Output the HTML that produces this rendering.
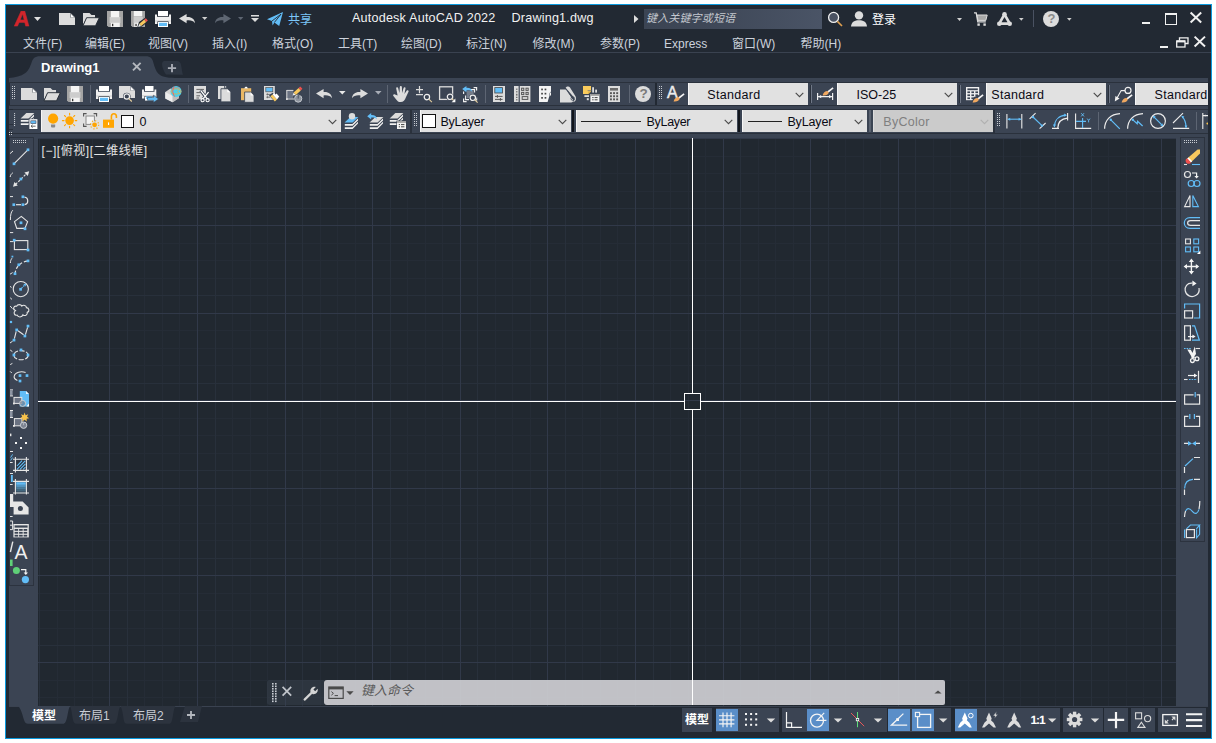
<!DOCTYPE html>
<html lang="zh-CN"><head><meta charset="utf-8"><title>Autodesk AutoCAD 2022 - Drawing1.dwg</title>
<style>
html,body{margin:0;padding:0;background:#fff;}
body{width:1216px;height:743px;position:relative;overflow:hidden;font-family:"Liberation Sans","Noto Sans CJK SC",sans-serif;}
.t{position:absolute;white-space:nowrap;}
svg{overflow:visible}
</style></head><body>
<div style="position:absolute;left:5px;top:4px;width:1205px;height:733px;border:1px solid #0a9ade;background:#222933"></div>
<div style="position:absolute;left:644px;top:9px;width:178px;height:20px;background:linear-gradient(90deg,#3b4453 0%,#3f4858 40%,#4a5466 100%)"></div>
<div class="t" style="left:646px;top:10.2px;font-size:11px;line-height:16px;color:#c4c8cf;font-style:italic;letter-spacing:0.15px">键入关键字或短语</div>
<div class="t" style="left:352px;top:10px;font-size:12.6px;line-height:16px;color:#f2f2f2;letter-spacing:0.2px">Autodesk AutoCAD 2022</div>
<div class="t" style="left:511.5px;top:10px;font-size:12.6px;line-height:16px;color:#f2f2f2;letter-spacing:0.2px">Drawing1.dwg</div>
<div class="t" style="left:288px;top:12px;font-size:12px;line-height:16px;color:#7cc6f8;">共享</div>
<div class="t" style="left:872px;top:11.5px;font-size:12px;line-height:16px;color:#ffffff;">登录</div>
<div class="t" style="left:23px;top:35.6px;font-size:12px;line-height:16px;color:#ccd2dc;">文件(F)</div>
<div class="t" style="left:85px;top:35.6px;font-size:12px;line-height:16px;color:#ccd2dc;">编辑(E)</div>
<div class="t" style="left:148px;top:35.6px;font-size:12px;line-height:16px;color:#ccd2dc;">视图(V)</div>
<div class="t" style="left:212px;top:35.6px;font-size:12px;line-height:16px;color:#ccd2dc;">插入(I)</div>
<div class="t" style="left:272px;top:35.6px;font-size:12px;line-height:16px;color:#ccd2dc;">格式(O)</div>
<div class="t" style="left:338px;top:35.6px;font-size:12px;line-height:16px;color:#ccd2dc;">工具(T)</div>
<div class="t" style="left:401px;top:35.6px;font-size:12px;line-height:16px;color:#ccd2dc;">绘图(D)</div>
<div class="t" style="left:466px;top:35.6px;font-size:12px;line-height:16px;color:#ccd2dc;">标注(N)</div>
<div class="t" style="left:532.5px;top:35.6px;font-size:12px;line-height:16px;color:#ccd2dc;">修改(M)</div>
<div class="t" style="left:600px;top:35.6px;font-size:12px;line-height:16px;color:#ccd2dc;">参数(P)</div>
<div class="t" style="left:664px;top:35.6px;font-size:12px;line-height:16px;color:#ccd2dc;">Express</div>
<div class="t" style="left:732px;top:35.6px;font-size:12px;line-height:16px;color:#ccd2dc;">窗口(W)</div>
<div class="t" style="left:800.5px;top:35.6px;font-size:12px;line-height:16px;color:#ccd2dc;">帮助(H)</div>
<div style="position:absolute;left:6px;top:52px;width:1205px;height:1px;background:#3a4250;"></div>
<div style="position:absolute;left:9px;top:78px;width:1199px;height:4px;background:#3b4453;"></div>
<div style="position:absolute;left:9px;top:82px;width:1199px;height:1px;background:#2a313c;"></div>
<svg style="position:absolute;left:9px;top:56px;" width="180" height="23" viewBox="0 0 180 23"><path d="M0,22 C6,21.5 12,20.2 16,17.2 C20,14.4 21.2,10 22.6,6.4 C24,2.4 25.6,0.3 31,0.3 L136.5,0.3 C142,0.3 143.4,3 144.3,6.4 C145.5,11 147,15 149.2,17.5 C152,20.5 157,21.8 166,22 Z" fill="#3b4453"/><path d="M157,18.6 C154,14 151,6 155,5 L168,5 C171.5,5 172,8 172.6,12 C173,15 173.4,17 174,18.8 Z" fill="#2e3642"/></svg>
<div class="t" style="left:41px;top:59.5px;font-size:13px;line-height:16px;color:#ffffff;font-weight:bold">Drawing1</div>
<div style="position:absolute;left:10px;top:83px;width:644.5px;height:22px;background:#3b4453;"></div>
<div style="position:absolute;left:656.5px;top:83px;width:551.5px;height:22px;background:#3b4453;"></div>
<div style="position:absolute;left:9px;top:105px;width:1199px;height:1px;background:#2a313c;"></div>
<div style="position:absolute;left:9px;top:106px;width:1199px;height:3px;background:#3b4453;"></div>
<div style="position:absolute;left:12.5px;top:109px;width:1195.5px;height:1px;background:#2a313c;"></div>
<div style="position:absolute;left:9px;top:110px;width:1199px;height:23px;background:#3b4453;"></div>
<div style="position:absolute;left:12.5px;top:133px;width:1195.5px;height:1px;background:#2a313c;"></div>
<div style="position:absolute;left:9px;top:134px;width:1199px;height:4px;background:#3b4453;"></div>
<div style="position:absolute;left:688px;top:83px;width:120px;height:22px;background:#e1e1e1;"></div>
<div style="position:absolute;left:688px;top:83px;width:1px;height:22px;background:#f6f6f6;"></div>
<div class="t" style="left:707.3px;top:86.9px;font-size:12.5px;line-height:16px;color:#0a0a14;letter-spacing:0.3px">Standard</div>
<svg style="position:absolute;left:795.4px;top:91.5px;" width="9" height="6" viewBox="0 0 9 6"><path d="M0.7,0.8 L4.5,4.6 L8.3,0.8" fill="none" stroke="#4a4a4a" stroke-width="1.1"/></svg>
<div style="position:absolute;left:837px;top:83px;width:120px;height:22px;background:#e1e1e1;"></div>
<div style="position:absolute;left:837px;top:83px;width:1px;height:22px;background:#f6f6f6;"></div>
<div class="t" style="left:856.5px;top:86.9px;font-size:12.5px;line-height:16px;color:#0a0a14;letter-spacing:0px">ISO-25</div>
<svg style="position:absolute;left:944.4px;top:91.5px;" width="9" height="6" viewBox="0 0 9 6"><path d="M0.7,0.8 L4.5,4.6 L8.3,0.8" fill="none" stroke="#4a4a4a" stroke-width="1.1"/></svg>
<div style="position:absolute;left:986px;top:83px;width:120px;height:22px;background:#e1e1e1;"></div>
<div style="position:absolute;left:986px;top:83px;width:1px;height:22px;background:#f6f6f6;"></div>
<div class="t" style="left:991.3px;top:86.9px;font-size:12.5px;line-height:16px;color:#0a0a14;letter-spacing:0.28px">Standard</div>
<svg style="position:absolute;left:1093.4px;top:91.5px;" width="9" height="6" viewBox="0 0 9 6"><path d="M0.7,0.8 L4.5,4.6 L8.3,0.8" fill="none" stroke="#4a4a4a" stroke-width="1.1"/></svg>
<div style="position:absolute;left:1135px;top:83px;width:73px;height:22px;background:#e1e1e1;"></div>
<div style="position:absolute;left:1135px;top:83px;width:1px;height:22px;background:#f6f6f6;"></div>
<div class="t" style="left:1154.6px;top:86.9px;font-size:12.5px;line-height:16px;color:#0a0a14;letter-spacing:0.28px">Standard</div>
<div style="position:absolute;left:41px;top:110px;width:300px;height:22px;background:#e1e1e1;"></div>
<div style="position:absolute;left:41px;top:110px;width:1px;height:22px;background:#f6f6f6;"></div>
<div class="t" style="left:139.5px;top:113.9px;font-size:12.5px;line-height:16px;color:#0a0a14;letter-spacing:0px">0</div>
<svg style="position:absolute;left:328.4px;top:118.5px;" width="9" height="6" viewBox="0 0 9 6"><path d="M0.7,0.8 L4.5,4.6 L8.3,0.8" fill="none" stroke="#4a4a4a" stroke-width="1.1"/></svg>
<div style="position:absolute;left:420px;top:110px;width:150.5px;height:22px;background:#e1e1e1;"></div>
<div style="position:absolute;left:420px;top:110px;width:1px;height:22px;background:#f6f6f6;"></div>
<div class="t" style="left:440.5px;top:113.9px;font-size:12.5px;line-height:16px;color:#0a0a14;letter-spacing:-0.28px">ByLayer</div>
<svg style="position:absolute;left:557.9px;top:118.5px;" width="9" height="6" viewBox="0 0 9 6"><path d="M0.7,0.8 L4.5,4.6 L8.3,0.8" fill="none" stroke="#4a4a4a" stroke-width="1.1"/></svg>
<div style="position:absolute;left:576px;top:110px;width:160.5px;height:22px;background:#e1e1e1;"></div>
<div style="position:absolute;left:576px;top:110px;width:1px;height:22px;background:#f6f6f6;"></div>
<div class="t" style="left:646.6px;top:113.9px;font-size:12.5px;line-height:16px;color:#0a0a14;letter-spacing:-0.33px">ByLayer</div>
<svg style="position:absolute;left:723.9px;top:118.5px;" width="9" height="6" viewBox="0 0 9 6"><path d="M0.7,0.8 L4.5,4.6 L8.3,0.8" fill="none" stroke="#4a4a4a" stroke-width="1.1"/></svg>
<div style="position:absolute;left:742px;top:110px;width:125px;height:22px;background:#e1e1e1;"></div>
<div style="position:absolute;left:742px;top:110px;width:1px;height:22px;background:#f6f6f6;"></div>
<div class="t" style="left:787.4px;top:113.9px;font-size:12.5px;line-height:16px;color:#0a0a14;letter-spacing:-0.15px">ByLayer</div>
<svg style="position:absolute;left:854.4px;top:118.5px;" width="9" height="6" viewBox="0 0 9 6"><path d="M0.7,0.8 L4.5,4.6 L8.3,0.8" fill="none" stroke="#4a4a4a" stroke-width="1.1"/></svg>
<div style="position:absolute;left:873px;top:110px;width:119.5px;height:22px;background:#cbcbcb;"></div>
<div style="position:absolute;left:873px;top:110px;width:1px;height:22px;background:#dcdcdc;"></div>
<div class="t" style="left:883.3px;top:113.9px;font-size:12.5px;line-height:16px;color:#7f7f7f;letter-spacing:0.28px">ByColor</div>
<svg style="position:absolute;left:979.9px;top:118.5px;" width="9" height="6" viewBox="0 0 9 6"><path d="M0.7,0.8 L4.5,4.6 L8.3,0.8" fill="none" stroke="#b0b0b0" stroke-width="1.1"/></svg>
<div style="position:absolute;left:572px;top:110px;width:2px;height:22px;background:#11151b;"></div>
<div style="position:absolute;left:738px;top:110px;width:2px;height:22px;background:#11151b;"></div>
<div style="position:absolute;left:869px;top:110px;width:2px;height:22px;background:#5a6270;"></div>
<div style="position:absolute;left:581px;top:121px;width:60px;height:1px;background:#222;"></div>
<div style="position:absolute;left:747.5px;top:121px;width:34.5px;height:1px;background:#222;"></div>
<div style="position:absolute;left:121px;top:115px;width:11px;height:11px;background:#fff;border:1px solid #111"></div>
<div style="position:absolute;left:422px;top:114px;width:12px;height:12px;background:#fff;border:1px solid #111"></div>
<div style="position:absolute;left:9px;top:138px;width:29px;height:568px;background:#3b4453;"></div>
<div style="position:absolute;left:1176px;top:138px;width:32px;height:568px;background:#3b4453;"></div>
<div style="position:absolute;left:9px;top:137px;width:25px;height:449px;background:#3b4453;border:1px solid #2c333f;box-sizing:border-box"></div>
<div style="position:absolute;left:1180px;top:137px;width:25px;height:405px;background:#3b4453;border:1px solid #2c333f;box-sizing:border-box"></div>
<svg style="position:absolute;left:38px;top:138px;shape-rendering:crispEdges" width="1138" height="568" viewBox="0 0 1138 568"><rect x="0" y="0" width="1138" height="568" fill="#212830"/><path d="M19.5,0V568M36.5,0V568M54.5,0V568M106.5,0V568M124.5,0V568M141.5,0V568M194.5,0V568M212.5,0V568M229.5,0V568M282.5,0V568M299.5,0V568M317.5,0V568M369.5,0V568M387.5,0V568M404.5,0V568M457.5,0V568M474.5,0V568M492.5,0V568M544.5,0V568M562.5,0V568M579.5,0V568M632.5,0V568M650.5,0V568M667.5,0V568M720.5,0V568M737.5,0V568M755.5,0V568M807.5,0V568M825.5,0V568M842.5,0V568M895.5,0V568M912.5,0V568M930.5,0V568M982.5,0V568M1000.5,0V568M1017.5,0V568M1070.5,0V568M1088.5,0V568M1105.5,0V568M0,18.5H1138M0,35.5H1138M0,53.5H1138M0,105.5H1138M0,122.5H1138M0,140.5H1138M0,192.5H1138M0,210.5H1138M0,227.5H1138M0,280.5H1138M0,297.5H1138M0,315.5H1138M0,367.5H1138M0,385.5H1138M0,402.5H1138M0,455.5H1138M0,472.5H1138M0,490.5H1138M0,542.5H1138M0,559.5H1138" stroke="#252c36" stroke-width="1" fill="none"/><path d="M1.5,0V568M89.5,0V568M177.5,0V568M264.5,0V568M352.5,0V568M439.5,0V568M527.5,0V568M615.5,0V568M702.5,0V568M790.5,0V568M877.5,0V568M965.5,0V568M1053.5,0V568M0,70.5H1138M0,157.5H1138M0,245.5H1138M0,332.5H1138M0,420.5H1138M0,507.5H1138" stroke="#28303b" stroke-width="1" fill="none"/><path d="M71.5,0V568M159.5,0V568M247.5,0V568M334.5,0V568M422.5,0V568M509.5,0V568M597.5,0V568M685.5,0V568M772.5,0V568M860.5,0V568M947.5,0V568M1035.5,0V568M1123.5,0V568M0,0.5H1138M0,87.5H1138M0,175.5H1138M0,262.5H1138M0,350.5H1138M0,437.5H1138M0,524.5H1138" stroke="#313949" stroke-width="1" fill="none"/></svg>
<svg style="position:absolute;left:38px;top:138px;shape-rendering:crispEdges;z-index:3" width="1138" height="568" viewBox="0 0 1138 568"><path d="M0,263.5H646 M663,263.5H1138 M654.5,0V255 M654.5,272V567" stroke="#ffffff" stroke-width="1" fill="none"/><rect x="646.5" y="255.5" width="16" height="16" fill="none" stroke="#fff" stroke-width="1"/></svg>
<div class="t" style="left:41.5px;top:142.5px;font-size:12px;line-height:16px;color:#e4e4e4;letter-spacing:0.55px">[&minus;][俯视][二维线框]</div>
<div style="position:absolute;left:267px;top:680px;width:57px;height:25px;background:rgba(59,68,83,0.45);border-radius:3px 0 0 3px"></div>
<div style="position:absolute;left:324px;top:680px;width:621px;height:25px;background:rgba(205,206,210,0.93);border-radius:3px 2px 2px 3px"></div>
<div class="t" style="left:361px;top:683px;font-size:13px;line-height:16px;color:#5a5a5a;font-style:italic">键入命令</div>
<div style="position:absolute;left:9px;top:706px;width:1199px;height:1px;background:#3a4250;"></div>
<svg style="position:absolute;left:9px;top:706px;" width="200" height="20" viewBox="0 0 200 20"><path d="M9,0 L61,0 C59,3 58.5,13 56.5,16 C56,17.4 55,17.7 54,17.7 L19,17.7 C17,17.7 16,16.5 15.4,15 C13.5,10 12.5,3 9,0Z" fill="#3b4453"/><path d="M61,0 L111.4,0 C109.4,3 108.8,13 107.2,16 C106.6,17.4 105.6,17.7 104.6,17.7 L67.4,17.7 C65.6,17.7 64.8,16.5 64.3,15 C63,10 62.6,3 61,0 Z" fill="#2c333e"/><path d="M111.4,0 L166.4,0 C164.4,3 164,13 162.4,16 C162,17.4 161,17.7 160,17.7 L118,17.7 C116,17.7 115.4,16.5 115,15 C114,10 113.5,3 111.4,0Z" fill="#2c333e"/><path d="M176,0 L193,0 L189,16 L171,16 Z" fill="#2c333e"/></svg>
<div class="t" style="left:32px;top:708.3px;font-size:12px;line-height:16px;color:#ffffff;font-weight:bold">模型</div>
<div class="t" style="left:79px;top:708.3px;font-size:12px;line-height:16px;color:#c8ccd4;">布局1</div>
<div class="t" style="left:133px;top:708.3px;font-size:12px;line-height:16px;color:#c8ccd4;">布局2</div>
<div style="position:absolute;left:682px;top:708px;width:30px;height:23.5px;background:#3b4453;"></div>
<div style="position:absolute;left:716px;top:708px;width:63px;height:23.5px;background:#3b4453;"></div>
<div style="position:absolute;left:782px;top:708px;width:104.5px;height:23.5px;background:#3b4453;"></div>
<div style="position:absolute;left:888px;top:708px;width:63px;height:23.5px;background:#3b4453;"></div>
<div style="position:absolute;left:955px;top:708px;width:105px;height:23.5px;background:#3b4453;"></div>
<div style="position:absolute;left:1063px;top:708px;width:40px;height:23.5px;background:#3b4453;"></div>
<div style="position:absolute;left:1104px;top:708px;width:24px;height:23.5px;background:#3b4453;"></div>
<div style="position:absolute;left:1131px;top:708px;width:24px;height:23.5px;background:#3b4453;"></div>
<div style="position:absolute;left:1158px;top:708px;width:48px;height:23.5px;background:#3b4453;"></div>
<div style="position:absolute;left:716px;top:709px;width:22px;height:22px;background:#5a8ec8;"></div>
<div style="position:absolute;left:807px;top:709px;width:22px;height:22px;background:#5a8ec8;"></div>
<div style="position:absolute;left:888px;top:709px;width:22px;height:22px;background:#5a8ec8;"></div>
<div style="position:absolute;left:912px;top:709px;width:22px;height:22px;background:#5a8ec8;"></div>
<div style="position:absolute;left:955px;top:709px;width:22px;height:22px;background:#5a8ec8;"></div>
<div class="t" style="left:685px;top:712px;font-size:12px;line-height:16px;color:#ffffff;font-weight:bold">模型</div>
<div class="t" style="left:1030.4px;top:711.5px;font-size:12px;line-height:16px;color:#ffffff;letter-spacing:-1px;text-rendering:geometricPrecision;font-weight:bold">1:1</div>
<div class="t" style="left:13.9px;top:7px;font-size:21.5px;line-height:24px;color:#d3252b;font-weight:bold;transform:skewX(-5deg);-webkit-text-stroke:0.5px #d3252b;">A</div>
<svg style="position:absolute;left:34px;top:17px;" width="7" height="4" viewBox="0 0 7 4"><path d="M0,0H7L3.5,4Z" fill="#e0e0e0"/></svg>
<svg style="position:absolute;left:59px;top:13px;" width="16" height="12" viewBox="0 0 16 12"><path d="M0,0H11.5L16,4.2V12H0Z" fill="#dcdcdc"/><path d="M11.3,0L16.2,4.6H11.3Z" fill="#222933"/><path d="M11.6,0.6L15.6,4.4H11.6Z" fill="#ffffff"/></svg>
<svg style="position:absolute;left:82.7px;top:13px;" width="16.5" height="13" viewBox="0 0 16.5 13"><path d="M0,0H6.5L8.5,2H12V5H3.5L0,11.5Z" fill="#dcdcdc"/><path d="M3.6,4.7H16.3L12.5,12.8H0Z" fill="#dcdcdc" stroke="#222933" stroke-width="0.9"/></svg>
<svg style="position:absolute;left:107px;top:11px;" width="16" height="16" viewBox="0 0 16 16"><path d="M0,0H16V16H1.5L0,14.5Z" fill="#a4a4a4"/><rect x="2.6" y="6" width="10.8" height="6" fill="#cdcdcd"/><rect x="3.8" y="0" width="8.4" height="6.2" fill="#f4f4f4"/><rect x="3.8" y="11.8" width="9" height="4.2" fill="#f4f4f4"/><rect x="5" y="12.8" width="1.3" height="2.4" fill="#333"/></svg>
<svg style="position:absolute;left:131px;top:11px;" width="16" height="16" viewBox="0 0 16 16"><path d="M0,0H14V16H1.5L0,14.5Z" fill="#a4a4a4"/><rect x="2.6" y="6" width="9.2" height="6" fill="#cdcdcd"/><rect x="2.8" y="0" width="8.4" height="5.4" fill="#f4f4f4"/><rect x="3.2" y="11.8" width="6" height="4.2" fill="#f4f4f4"/><rect x="4.4" y="12.8" width="1.3" height="2.4" fill="#333"/><path d="M6,17L8,11L14.5,6.5L17.5,10.5L11,15.5Z" fill="#222933"/><path d="M7.1,15.9L8.3,12.7L10.2,15Z" fill="#f0f0f0"/><path d="M8.3,12.7L13.3,8.6L15.2,10.9L10.2,15Z" fill="#f7c85e"/><path d="M13.3,8.6L14.9,7.3L16.8,9.6L15.2,10.9Z" fill="#f0504e"/></svg>
<svg style="position:absolute;left:155px;top:11px;" width="16" height="16" viewBox="0 0 16 16"><rect x="3" y="0" width="10" height="5" fill="#fff"/><path d="M0,3.5H2V5.8H14V3.5H16V13H0Z" fill="#f0f0f0"/><rect x="0" y="9.5" width="16" height="1" fill="#cfcfcf"/><rect x="2.4" y="10.4" width="11.2" height="5.6" fill="#222933"/><rect x="3" y="11" width="10" height="5" fill="#fff"/><rect x="4" y="11.8" width="8" height="3.2" fill="#62bdf7"/></svg>
<svg style="position:absolute;left:179px;top:13.6px;" width="16" height="10" viewBox="0 0 16 10"><g ><path d="M0,4.6L7.6,0V3C12.5,2.6 15.8,5 16,9.2C14.2,6.6 11.5,6 7.6,6.4V9.2Z" fill="#dcdcdc"/></g></svg>
<svg style="position:absolute;left:202px;top:17px;" width="5.4" height="3" viewBox="0 0 5.4 3"><path d="M0,0H5.4L2.7,3Z" fill="#d0d0d0"/></svg>
<svg style="position:absolute;left:215px;top:13.6px;" width="16" height="10" viewBox="0 0 16 10"><g transform="translate(16,0) scale(-1,1)"><path d="M0,4.6L7.6,0V3C12.5,2.6 15.8,5 16,9.2C14.2,6.6 11.5,6 7.6,6.4V9.2Z" fill="#5e6672"/></g></svg>
<svg style="position:absolute;left:238px;top:17px;" width="5.4" height="3" viewBox="0 0 5.4 3"><path d="M0,0H5.4L2.7,3Z" fill="#5e6672"/></svg>
<svg style="position:absolute;left:251px;top:15px;" width="8" height="7" viewBox="0 0 8 7"><rect x="0" y="0" width="8" height="1.5" fill="#dcdcdc"/><path d="M0,3H8L4,7Z" fill="#dcdcdc"/></svg>
<svg style="position:absolute;left:267px;top:12px;" width="16" height="14" viewBox="0 0 16 14"><path d="M0,7.2L16,0L12.2,14L7.4,10.4L5.6,13.4L5,9Z" fill="#62bdf7"/><path d="M5,9L14,2.2L7.4,10.4" fill="none" stroke="#222933" stroke-width="0.9"/></svg>
<svg style="position:absolute;left:634px;top:15px;" width="4.5" height="8" viewBox="0 0 4.5 8"><path d="M0,0L4.5,4L0,8Z" fill="#dcdcdc"/></svg>
<svg style="position:absolute;left:827px;top:11px;" width="17" height="17" viewBox="0 0 17 17"><circle cx="6.6" cy="6.4" r="5" fill="#4a5262" stroke="#f0f0f0" stroke-width="1.3"/><path d="M10.4,10.4L15,15" stroke="#e0a050" stroke-width="1.6"/></svg>
<svg style="position:absolute;left:851px;top:10.5px;" width="16" height="16" viewBox="0 0 16 16"><circle cx="8" cy="4.4" r="4.2" fill="#dcdcdc"/><path d="M0,15.5C0.5,10.5 4,9.2 8,9.2C12,9.2 15.5,10.5 16,15.5Z" fill="#dcdcdc"/></svg>
<svg style="position:absolute;left:957.3px;top:17.8px;" width="5" height="3" viewBox="0 0 5 3"><path d="M0,0H5L2.5,3Z" fill="#d0d0d0"/></svg>
<svg style="position:absolute;left:974px;top:12px;" width="14" height="15" viewBox="0 0 14 15"><path d="M0,0.8H2.2L3.8,9.8H11.8" fill="none" stroke="#dcdcdc" stroke-width="1.3"/><path d="M3,3H13.2L11.8,8.4H3.9Z" fill="#a8a8a8" stroke="#dcdcdc" stroke-width="1"/><rect x="3.4" y="11.4" width="2.4" height="2.4" fill="#dcdcdc"/><rect x="9.4" y="11.4" width="2.4" height="2.4" fill="#dcdcdc"/></svg>
<svg style="position:absolute;left:997px;top:12px;" width="15" height="14" viewBox="0 0 15 14"><path d="M7.5,2.4L2.2,11.6H12.8Z" fill="none" stroke="#dcdcdc" stroke-width="2.7" stroke-linejoin="round"/><circle cx="7.5" cy="2.3" r="2.3" fill="#dcdcdc"/><circle cx="2.3" cy="11.7" r="2.3" fill="#dcdcdc"/><circle cx="12.7" cy="11.7" r="2.3" fill="#dcdcdc"/></svg>
<svg style="position:absolute;left:1018.5px;top:18px;" width="4.6" height="2.8" viewBox="0 0 4.6 2.8"><path d="M0,0H4.6L2.3,2.8Z" fill="#d0d0d0"/></svg>
<div style="position:absolute;left:1033px;top:10px;width:1px;height:17px;background:#4a5262;"></div>
<svg style="position:absolute;left:1043px;top:11px;" width="16" height="16" viewBox="0 0 16 16"><circle cx="8" cy="8" r="8" fill="#dcdcdc"/></svg>
<div class="t" style="left:1047.6px;top:11px;font-size:13px;line-height:16px;color:#8a8a8a;font-weight:bold">?</div>
<svg style="position:absolute;left:1066.6px;top:18px;" width="4.6" height="2.8" viewBox="0 0 4.6 2.8"><path d="M0,0H4.6L2.3,2.8Z" fill="#d0d0d0"/></svg>
<div style="position:absolute;left:1142px;top:22px;width:8px;height:2px;background:#f0f0f0;"></div>
<div style="position:absolute;left:1165px;top:13px;width:9.6px;height:8.5px;border:1px solid #f0f0f0;border-top-width:2px;box-sizing:content-box"></div>
<svg style="position:absolute;left:1190px;top:12px;" width="12" height="11" viewBox="0 0 12 11"><path d="M0.6,0.6L11.2,10.5M11.2,0.6L0.6,10.5" stroke="#f0f0f0" stroke-width="2"/></svg>
<div style="position:absolute;left:1160px;top:46px;width:8px;height:2px;background:#f0f0f0;"></div>
<svg style="position:absolute;left:1175.5px;top:37px;" width="13" height="11" viewBox="0 0 13 11"><path d="M3.5,3.5V0.8H12V6.5H9" fill="none" stroke="#f0f0f0" stroke-width="1.3"/><rect x="0.7" y="4" width="8.3" height="6" fill="none" stroke="#f0f0f0" stroke-width="1.3"/><path d="M0.7,4.4H9" stroke="#f0f0f0" stroke-width="2"/></svg>
<svg style="position:absolute;left:1194px;top:36px;" width="12" height="11" viewBox="0 0 12 11"><path d="M0.6,0.6L11,10.5M11,0.6L0.6,10.5" stroke="#f0f0f0" stroke-width="2"/></svg>
<svg style="position:absolute;left:12px;top:86px;shape-rendering:crispEdges" width="3" height="13" viewBox="0 0 3 13"><g fill="#c8ccd2"><rect x="0" y="0" width="1" height="1"/><rect x="2" y="0" width="1" height="1"/><rect x="0" y="2" width="1" height="1"/><rect x="2" y="2" width="1" height="1"/><rect x="0" y="4" width="1" height="1"/><rect x="2" y="4" width="1" height="1"/><rect x="0" y="6" width="1" height="1"/><rect x="2" y="6" width="1" height="1"/><rect x="0" y="8" width="1" height="1"/><rect x="2" y="8" width="1" height="1"/><rect x="0" y="10" width="1" height="1"/><rect x="2" y="10" width="1" height="1"/><rect x="0" y="12" width="1" height="1"/><rect x="2" y="12" width="1" height="1"/></g></svg>
<svg style="position:absolute;left:21px;top:88px;" width="16" height="12" viewBox="0 0 16 12"><path d="M0,0H11.5L16,4.2V12H0Z" fill="#dcdcdc"/><path d="M11.3,0L16.2,4.6H11.3Z" fill="#222933"/><path d="M11.6,0.6L15.6,4.4H11.6Z" fill="#ffffff"/></svg>
<svg style="position:absolute;left:44px;top:88px;" width="16.5" height="13" viewBox="0 0 16.5 13"><path d="M0,0H6.5L8.5,2H12V5H3.5L0,11.5Z" fill="#dcdcdc"/><path d="M3.6,4.7H16.3L12.5,12.8H0Z" fill="#dcdcdc" stroke="#222933" stroke-width="0.9"/></svg>
<svg style="position:absolute;left:67px;top:86px;" width="16" height="16" viewBox="0 0 16 16"><path d="M0,0H16V16H1.5L0,14.5Z" fill="#a4a4a4"/><rect x="2.6" y="6" width="10.8" height="6" fill="#cdcdcd"/><rect x="3.8" y="0" width="8.4" height="6.2" fill="#f4f4f4"/><rect x="3.8" y="11.8" width="9" height="4.2" fill="#f4f4f4"/><rect x="5" y="12.8" width="1.3" height="2.4" fill="#333"/></svg>
<div style="position:absolute;left:90px;top:85px;width:1px;height:18px;background:#5d6573;"></div>
<svg style="position:absolute;left:96px;top:86px;" width="16" height="16" viewBox="0 0 16 16"><rect x="3" y="0" width="10" height="5" fill="#fff"/><path d="M0,3.5H2V5.8H14V3.5H16V13H0Z" fill="#f0f0f0"/><rect x="0" y="9.5" width="16" height="1" fill="#cfcfcf"/><rect x="2.4" y="10.4" width="11.2" height="5.6" fill="#222933"/><rect x="3" y="11" width="10" height="5" fill="#fff"/><rect x="4" y="11.8" width="8" height="3.2" fill="#62bdf7"/></svg>
<svg style="position:absolute;left:119px;top:86px;" width="17" height="16" viewBox="0 0 17 16"><path d="M0,0H11.5L16,4.2V12H0Z" fill="#dcdcdc"/><path d="M11.3,0L16.2,4.6H11.3Z" fill="#3b4453"/><path d="M11.6,0.6L15.6,4.4H11.6Z" fill="#fff"/><circle cx="7.8" cy="10.5" r="3.8" fill="#3b4453"/><circle cx="7.8" cy="10.5" r="2.7" fill="none" stroke="#f0f0f0" stroke-width="1.2"/><path d="M9.744,12.443999999999999L12.8,15.5" stroke="#e6d0a0" stroke-width="1.1"/></svg>
<svg style="position:absolute;left:142px;top:86px;" width="17" height="16" viewBox="0 0 17 16"><rect x="3" y="0" width="8.5" height="5" fill="#fff"/><path d="M0,3.5H2V5.8H12.5V3.5H14.3V12.5H0Z" fill="#f0f0f0"/><rect x="0" y="9.3" width="14.3" height="1" fill="#cfcfcf"/><rect x="2.4" y="10" width="10" height="5" fill="#3b4453"/><rect x="3" y="10.6" width="8.6" height="4" fill="#fff"/><rect x="4.2" y="10.4" width="6" height="2.6" fill="#62bdf7"/><path d="M5.6,11.4H11.4V9.2L16.6,13L11.4,16.6V14.4H5.6Z" fill="#62bdf7" stroke="#3b4453" stroke-width="0.6"/></svg>
<svg style="position:absolute;left:164.5px;top:85.5px;" width="17" height="17" viewBox="0 0 17 17"><path d="M0.3,6L5.5,2.5L14,6.8V12L7.6,16.3L0.3,12.4Z" fill="#d4d4d4"/><path d="M0.3,6L7.6,10V16.3L0.3,12.4Z" fill="#ececec"/><path d="M7.6,10L14,6.8V12L7.6,16.3Z" fill="#bdbdbd"/><circle cx="11" cy="5.4" r="5.5" fill="#48d2ee"/><ellipse cx="11.2" cy="5.4" rx="4.8" ry="2.6" fill="none" stroke="#f8a53a" stroke-width="0.75"/><path d="M14,3.8L12.4,5.4L14,7" fill="none" stroke="#f8a53a" stroke-width="0.7"/><path d="M9.2,0.4C7.2,3.4 7.4,7.4 9.6,10.6" fill="none" stroke="#f2605a" stroke-width="0.95"/><path d="M6.4,2.8C8.6,1.8 12,1.4 14.8,2" fill="none" stroke="#f2605a" stroke-width="0.6" opacity="0.8"/></svg>
<div style="position:absolute;left:188px;top:85px;width:1px;height:18px;background:#5d6573;"></div>
<svg style="position:absolute;left:194px;top:86px;" width="17" height="16" viewBox="0 0 17 16"><rect x="0" y="0" width="12" height="13.5" fill="#dcdcdc"/><path d="M2.4,3.4H10M2.4,6.6H6.5M2.4,9.8H6M2.4,12H5" stroke="#666" stroke-width="1"/><path d="M6.6,4.4L13.2,13.4M14.6,6L8.8,13.4" stroke="#3b4453" stroke-width="3"/><path d="M6.8,4.6L13.4,13.2M14.6,6.2L8.8,13.2" stroke="#fff" stroke-width="1.3"/><circle cx="8.6" cy="14.2" r="1.6" fill="#3b4453" stroke="#fff" stroke-width="1.1"/><circle cx="13.6" cy="14.2" r="1.6" fill="#3b4453" stroke="#fff" stroke-width="1.1"/></svg>
<svg style="position:absolute;left:218px;top:86px;" width="13" height="16" viewBox="0 0 13 16"><path d="M0,0H6.2V2.6H2.8V13H0Z" fill="#dcdcdc"/><path d="M3,2.8H9.3L12.8,6.2V15.8H3Z" fill="#dcdcdc" stroke="#3b4453" stroke-width="0.7"/><path d="M9.3,3.2L12.4,6.2H9.3Z" fill="#fff"/><circle cx="7.6" cy="0.9" r="0.7" fill="#fff"/></svg>
<svg style="position:absolute;left:241px;top:85.5px;" width="14" height="17" viewBox="0 0 14 17"><path d="M0,2.2H10.2V14.2H0Z" fill="#e9b765"/><path d="M3.6,2.2C3.6,0.2 6.6,0.2 6.6,2.2L7.6,2.6H2.6Z" fill="#fff"/><path d="M3.6,6H9.6L13,9.4V16.3H3.6Z" fill="#dcdcdc" stroke="#3b4453" stroke-width="0.8"/><path d="M9.6,6.4L12.6,9.4H9.6Z" fill="#fff"/></svg>
<svg style="position:absolute;left:264px;top:85.8px;" width="16" height="17" viewBox="0 0 16 17"><rect x="0" y="0" width="10.8" height="14" fill="#dcdcdc"/><rect x="1.8" y="1.6" width="7" height="4.2" fill="#62bdf7" stroke="#555" stroke-width="0.7"/><path d="M2.4,8.4H7M2.4,11.2H6M3.4,7.4V9.4M3.4,10.2V12.2" stroke="#666" stroke-width="0.9"/><path d="M5,9.6L8.4,6.8L16,12.8L12,17Z" fill="#3b4453"/><path d="M6.4,10.2L8.6,8.4L13,13.6L10.8,15.6Z" fill="#f7c85e"/><path d="M8.6,8.4L10.2,7L11.4,8.4L12.6,7.4L15.2,10.6L13,13.6Z" fill="#fff"/></svg>
<svg style="position:absolute;left:286px;top:85.5px;" width="17" height="17" viewBox="0 0 17 17"><rect x="0.8" y="4.4" width="6.4" height="8" fill="#6a7282"/><path d="M0.8,4.4H7.4M0.8,4V13H8" fill="none" stroke="#dcdcdc" stroke-width="1"/><rect x="0" y="12.2" width="1.8" height="1.8" fill="#dcdcdc"/><circle cx="12.2" cy="12.6" r="3.6" fill="#8d939d" stroke="#c4c8ce" stroke-width="1"/><path d="M12.2,12.6V9H15.8" fill="none" stroke="#3b4453" stroke-width="0.8"/><path d="M6.6,9.6L7.6,6.6L9.8,9Z" fill="#eee"/><path d="M7.6,6.6L12.6,2L14.8,4.4L9.8,9Z" fill="#f7c85e"/><path d="M12.6,2L14.2,0.4L16.4,2.8L14.8,4.4Z" fill="#f0504e"/></svg>
<div style="position:absolute;left:309px;top:85px;width:1px;height:18px;background:#5d6573;"></div>
<svg style="position:absolute;left:316px;top:89px;" width="16" height="10" viewBox="0 0 16 10"><g ><path d="M0,4.6L7.6,0V3C12.5,2.6 15.8,5 16,9.2C14.2,6.6 11.5,6 7.6,6.4V9.2Z" fill="#dcdcdc"/></g></svg>
<svg style="position:absolute;left:338.7px;top:91px;" width="6.6" height="3.6" viewBox="0 0 6.6 3.6"><path d="M0,0H6.6L3.3,3.6Z" fill="#e8e8e8"/></svg>
<svg style="position:absolute;left:352px;top:89px;" width="16" height="10" viewBox="0 0 16 10"><g transform="translate(16,0) scale(-1,1)"><path d="M0,4.6L7.6,0V3C12.5,2.6 15.8,5 16,9.2C14.2,6.6 11.5,6 7.6,6.4V9.2Z" fill="#dcdcdc"/></g></svg>
<svg style="position:absolute;left:374.6px;top:91px;" width="6.6" height="3.6" viewBox="0 0 6.6 3.6"><path d="M0,0H6.6L3.3,3.6Z" fill="#a8adb6"/></svg>
<div style="position:absolute;left:387px;top:85px;width:1px;height:18px;background:#5d6573;"></div>
<svg style="position:absolute;left:393px;top:85.8px;" width="16.5" height="16" viewBox="0 0 16.5 16"><path d="M4.6,9.6L3.2,2.6C3,1.2 4.8,0.8 5.2,2.2L6.4,7L6.8,1.2C6.9,-0.3 8.8,-0.3 8.9,1.2L9.1,7L10.6,2C11,0.7 12.8,1.2 12.5,2.6L11.4,8L13.8,4.6C14.6,3.5 16.2,4.5 15.5,5.8L12.8,11.4C12,14 10.4,16 7.6,16C5.4,16 4.4,15 3.2,13.4L0.4,10C-0.5,8.8 0.9,7.6 2,8.4Z" fill="#dcdcdc"/></svg>
<svg style="position:absolute;left:416px;top:86px;" width="17" height="16" viewBox="0 0 17 16"><path d="M0,3.6H7M3.5,0V7.2M0,8.6H7" stroke="#dcdcdc" stroke-width="1.2" fill="none"/><circle cx="10.9" cy="11.1" r="2.7" fill="none" stroke="#f0f0f0" stroke-width="1.2"/><path d="M12.844000000000001,13.044L15.9,16.1" stroke="#e6d0a0" stroke-width="1.1"/></svg>
<svg style="position:absolute;left:439px;top:86px;" width="17" height="17" viewBox="0 0 17 17"><rect x="0.6" y="0.8" width="13" height="12.6" fill="none" stroke="#dcdcdc" stroke-width="1.3"/><circle cx="11" cy="10.8" r="3.8" fill="#3b4453"/><circle cx="11" cy="10.8" r="2.7" fill="none" stroke="#f0f0f0" stroke-width="1.2"/><path d="M12.943999999999999,12.744L14.5,14.3" stroke="#e6d0a0" stroke-width="1.1"/><path d="M16.4,12.4V16.2H12.6Z" fill="#fff"/></svg>
<svg style="position:absolute;left:462px;top:85.5px;" width="17" height="17" viewBox="0 0 17 17"><path d="M11.6,1.6H14.6V4.6M14.6,11.6V14.6M4.6,15.6H1.6V12.6M1.6,5.6V8" fill="none" stroke="#f0f0f0" stroke-width="1.2"/><path d="M9,3.6H12.6V6.4M3.6,9.4V13.6H7" fill="none" stroke="#f0f0f0" stroke-width="1.1"/><rect x="4.6" y="4.6" width="7" height="7.6" fill="#747c8a"/><path d="M0.2,3L4.4,0V1.8C8,1.6 10,3.2 10.2,6C9,4.4 7,4.2 4.4,4.4V6.2Z" fill="#62bdf7"/><circle cx="10.8" cy="11.8" r="3.7" fill="#3b4453"/><circle cx="10.8" cy="11.8" r="2.7" fill="none" stroke="#f0f0f0" stroke-width="1.2"/><path d="M12.744,13.744L15.600000000000001,16.6" stroke="#e6d0a0" stroke-width="1.1"/></svg>
<div style="position:absolute;left:485px;top:85px;width:1px;height:18px;background:#5d6573;"></div>
<svg style="position:absolute;left:493px;top:86px;" width="12" height="16" viewBox="0 0 12 16"><rect x="0" y="0" width="12" height="16" fill="#dcdcdc"/><rect x="1.8" y="1.6" width="7.6" height="5.4" fill="#62bdf7" stroke="#444" stroke-width="0.8"/><path d="M2,10.4H9.6M2,13.4H9.6M4.4,9V11.8M7.4,12V14.8" stroke="#555" stroke-width="1"/></svg>
<svg style="position:absolute;left:514px;top:86px;" width="16.5" height="16" viewBox="0 0 16.5 16"><rect x="0" y="0" width="4.6" height="16" fill="#dcdcdc"/><rect x="5.8" y="0" width="10.6" height="16" fill="#dcdcdc"/><g fill="#555"><rect x="2.2" y="2.6" width="1.2" height="1.2"/><rect x="2.2" y="5.2" width="1.2" height="1.2"/><rect x="2.2" y="7.8" width="1.2" height="1.8"/><rect x="2.2" y="10.8" width="1.2" height="1.2"/><rect x="2.2" y="13.2" width="1.2" height="1.2"/></g><g fill="none" stroke="#555" stroke-width="1"><rect x="7.6" y="2.2" width="2.2" height="2.2"/><rect x="12" y="2.2" width="2.2" height="2.2"/><rect x="7.6" y="6.4" width="2.2" height="2.2"/><rect x="12" y="6.4" width="2.2" height="2.2"/><rect x="8.2" y="10.6" width="5.6" height="2.8"/></g></svg>
<svg style="position:absolute;left:539px;top:86px;" width="13" height="16" viewBox="0 0 13 16"><path d="M0,0H12V5.4L10.2,7.4V10.6L8.6,16H0Z" fill="#f4f4f4"/><path d="M12,6L10.6,7.6V10.4L12,9Z" fill="#f4f4f4"/><g fill="#444"><rect x="2.2" y="2.6" width="1.7" height="1.7"/><rect x="5.6" y="2.6" width="1.7" height="1.7"/><rect x="2.2" y="6.8" width="1.7" height="1.7"/><rect x="5.6" y="6.8" width="1.7" height="1.7"/><rect x="2.2" y="11" width="1.7" height="1.7"/><rect x="5.6" y="11" width="1.7" height="1.7"/></g></svg>
<svg style="position:absolute;left:560px;top:85.5px;" width="16.5" height="17" viewBox="0 0 16.5 17"><path d="M0,3.6H6.4L13,13.6C14,15 12.8,16.4 11.4,16.4H0Z" fill="#dcdcdc"/><path d="M5.6,1.8C6.6,0.2 9,0 10,1.4L15.6,10.6C16.8,13 15.6,16 12.6,16.3C15,14.8 14.6,12.6 13.6,11Z" fill="#dcdcdc"/><path d="M5.4,2.2L13.2,13.4" stroke="#3b4453" stroke-width="0.9"/><circle cx="12.8" cy="12.6" r="1.8" fill="none" stroke="#3b4453" stroke-width="0.8"/></svg>
<svg style="position:absolute;left:583px;top:86px;" width="16.5" height="16" viewBox="0 0 16.5 16"><path d="M0,0H8V5.4L5.4,8H0Z" fill="#f9cb5c"/><path d="M5.4,5.4H8L5.4,8Z" fill="#d8a840"/><path d="M4.6,4.6H8.6" stroke="#777" stroke-width="0.8"/><rect x="9.2" y="1.2" width="1.8" height="5.4" fill="#dcdcdc"/><rect x="12.2" y="3.6" width="1.8" height="3" fill="#dcdcdc"/><rect x="1.4" y="9.2" width="4.6" height="1.8" fill="#dcdcdc"/><rect x="3.8" y="12.2" width="2" height="2" fill="#dcdcdc"/><rect x="7.4" y="8" width="9" height="8" fill="#f4f4f4"/><rect x="7.4" y="8" width="9" height="1.8" fill="#9a9a9a"/><path d="M9.2,11.6H10.6M11.6,11.6H14.6M9.2,13.8H10.6M11.6,13.8H14.6" stroke="#444" stroke-width="1"/></svg>
<svg style="position:absolute;left:608px;top:86px;" width="12" height="16" viewBox="0 0 12 16"><rect x="0" y="0" width="12" height="16" fill="#dcdcdc"/><rect x="2" y="2" width="8" height="2.6" fill="#6a6a6a"/><g fill="#555"><rect x="2.0" y="6.2" width="1.9" height="1.9"/><rect x="5.1" y="6.2" width="1.9" height="1.9"/><rect x="8.2" y="6.2" width="1.9" height="1.9"/><rect x="2.0" y="9.3" width="1.9" height="1.9"/><rect x="5.1" y="9.3" width="1.9" height="1.9"/><rect x="8.2" y="9.3" width="1.9" height="1.9"/><rect x="2.0" y="12.4" width="1.9" height="1.9"/><rect x="5.1" y="12.4" width="1.9" height="1.9"/><rect x="8.2" y="12.4" width="1.9" height="1.9"/></g></svg>
<div style="position:absolute;left:629px;top:85px;width:1px;height:18px;background:#5d6573;"></div>
<svg style="position:absolute;left:635px;top:86px;" width="16" height="16" viewBox="0 0 16 16"><circle cx="8" cy="8" r="8" fill="#dcdcdc"/></svg>
<div class="t" style="left:639.4px;top:86px;font-size:13.5px;line-height:16px;color:#7a7a7a;font-weight:bold">?</div>
<svg style="position:absolute;left:659px;top:86px;shape-rendering:crispEdges" width="3" height="13" viewBox="0 0 3 13"><g fill="#c8ccd2"><rect x="0" y="0" width="1" height="1"/><rect x="2" y="0" width="1" height="1"/><rect x="0" y="2" width="1" height="1"/><rect x="2" y="2" width="1" height="1"/><rect x="0" y="4" width="1" height="1"/><rect x="2" y="4" width="1" height="1"/><rect x="0" y="6" width="1" height="1"/><rect x="2" y="6" width="1" height="1"/><rect x="0" y="8" width="1" height="1"/><rect x="2" y="8" width="1" height="1"/><rect x="0" y="10" width="1" height="1"/><rect x="2" y="10" width="1" height="1"/><rect x="0" y="12" width="1" height="1"/><rect x="2" y="12" width="1" height="1"/></g></svg>
<div class="t" style="left:667px;top:83.5px;font-size:16px;line-height:18px;color:#ececec;-webkit-text-stroke:0.45px #ececec">A</div>
<svg style="position:absolute;left:673px;top:93px;" width="12" height="9" viewBox="0 0 12 9"><path d="M5.4,4.2L10.6,0.2L11.6,1.4L6.6,5.6Z" fill="#f4f4f4"/><path d="M0.6,8.4C1,5.8 3.4,3.8 5.6,4L6.8,5.6C6.4,7.8 3.4,8.8 0.6,8.4Z" fill="#f0a860"/></svg>
<div style="position:absolute;left:811px;top:85px;width:1px;height:18px;background:#707887;"></div>
<div style="position:absolute;left:960px;top:85px;width:1px;height:18px;background:#707887;"></div>
<div style="position:absolute;left:1109px;top:85px;width:1px;height:18px;background:#707887;"></div>
<div style="position:absolute;left:810px;top:85px;width:1px;height:18px;background:#2a313c;"></div>
<div style="position:absolute;left:959px;top:85px;width:1px;height:18px;background:#2a313c;"></div>
<div style="position:absolute;left:1108px;top:85px;width:1px;height:18px;background:#2a313c;"></div>
<svg style="position:absolute;left:817px;top:87px;" width="16.5" height="14" viewBox="0 0 16.5 14"><path d="M0.6,6V13M15.6,6V13M1,9.6H15.2" stroke="#f0f0f0" stroke-width="1.2" fill="none"/><path d="M1.2,9.6L4.2,8V11.2ZM15,9.6L12,8V11.2Z" fill="#f0f0f0"/></svg>
<svg style="position:absolute;left:822px;top:86.6px;" width="12" height="9" viewBox="0 0 12 9"><path d="M5.4,4.2L10.6,0.2L11.6,1.4L6.6,5.6Z" fill="#f4f4f4"/><path d="M0.6,8.4C1,5.8 3.4,3.8 5.6,4L6.8,5.6C6.4,7.8 3.4,8.8 0.6,8.4Z" fill="#f0a860"/></svg>
<svg style="position:absolute;left:966px;top:87px;" width="14" height="14" viewBox="0 0 14 14"><rect x="0" y="0" width="13.2" height="13.2" fill="#f0f0f0"/><rect x="1.4" y="1.4" width="10.4" height="1.8" fill="#3b4453"/><rect x="1.4" y="4.4" width="2.6" height="1.7" fill="#3b4453"/><rect x="5.4" y="4.4" width="2.6" height="1.7" fill="#3b4453"/><rect x="9.4" y="4.4" width="2.6" height="1.7" fill="#3b4453"/><rect x="1.4" y="7.4" width="2.6" height="1.7" fill="#3b4453"/><rect x="5.4" y="7.4" width="2.6" height="1.7" fill="#3b4453"/><rect x="9.4" y="7.4" width="2.6" height="1.7" fill="#3b4453"/><rect x="1.4" y="10.4" width="2.6" height="1.7" fill="#3b4453"/><rect x="5.4" y="10.4" width="2.6" height="1.7" fill="#3b4453"/><rect x="9.4" y="10.4" width="2.6" height="1.7" fill="#3b4453"/><path d="M6,14L8,10L13,8L16,10L10,16Z" fill="#3b4453"/></svg>
<svg style="position:absolute;left:971.5px;top:93.5px;" width="12" height="9" viewBox="0 0 12 9"><path d="M5.4,4.2L10.6,0.2L11.6,1.4L6.6,5.6Z" fill="#f4f4f4"/><path d="M0.6,8.4C1,5.8 3.4,3.8 5.6,4L6.8,5.6C6.4,7.8 3.4,8.8 0.6,8.4Z" fill="#f0a860"/></svg>
<svg style="position:absolute;left:1114px;top:87px;" width="18" height="15" viewBox="0 0 18 15"><circle cx="14" cy="3.4" r="3" fill="none" stroke="#f0f0f0" stroke-width="1.2"/><path d="M11,3.6H7.2L3,11" fill="none" stroke="#f0f0f0" stroke-width="1.1"/><path d="M0.8,14.4L1.4,9L5.6,11.6Z" fill="#f0f0f0"/></svg>
<svg style="position:absolute;left:1120.5px;top:94px;" width="12" height="9" viewBox="0 0 12 9"><path d="M5.4,4.2L10.6,0.2L11.6,1.4L6.6,5.6Z" fill="#f4f4f4"/><path d="M0.6,8.4C1,5.8 3.4,3.8 5.6,4L6.8,5.6C6.4,7.8 3.4,8.8 0.6,8.4Z" fill="#f0a860"/></svg>
<div style="position:absolute;left:9px;top:124px;width:4px;height:1px;background:#2a313c;"></div>
<div style="position:absolute;left:9px;top:129px;width:4px;height:1px;background:#2a313c;"></div>
<svg style="position:absolute;left:9px;top:132px;shape-rendering:crispEdges" width="4" height="4" viewBox="0 0 4 4"><g fill="#c8ccd2"><rect x="0" y="0" width="1" height="1"/><rect x="2" y="0" width="1" height="1"/><rect x="0" y="2" width="1" height="1"/><rect x="2" y="2" width="1" height="1"/></g></svg>
<svg style="position:absolute;left:14px;top:113px;" width="1.2" height="14" viewBox="0 0 1.2 14"><g fill="#c8ccd2"><rect x="0" y="0" width="1.1" height="1.1"/><rect x="0" y="2" width="1.1" height="1.1"/><rect x="0" y="4" width="1.1" height="1.1"/><rect x="0" y="6" width="1.1" height="1.1"/><rect x="0" y="8" width="1.1" height="1.1"/><rect x="0" y="10" width="1.1" height="1.1"/><rect x="0" y="12" width="1.1" height="1.1"/></g></svg>
<svg style="position:absolute;left:21px;top:113px;" width="17" height="16" viewBox="0 0 17 16"><path d="M5.4,0H13.4L7.6,5.6H-0.4Z" fill="#dcdcdc"/><path d="M0,7.4H7.4L9,5.8M0,8.6H7.4L9.2,6.8" fill="none" stroke="#f0f0f0" stroke-width="0"/><path d="M-0.2,7H7.4L13,1.6V3.4L7.6,8.8H-0.2Z" fill="#f0f0f0"/><path d="M-0.2,10.2H7.4L13,4.8V6.6L7.6,12H-0.2Z" fill="#f0f0f0"/><rect x="7.6" y="5.6" width="9.4" height="10.8" fill="#3b4453"/><rect x="8.4" y="6.2" width="8" height="9.8" fill="#fff"/><rect x="9.8" y="7.8" width="5.2" height="2.8" fill="#62bdf7" stroke="#445" stroke-width="0.6"/><path d="M10,13.2H14.6M11.6,11.8L10,13.2L11.6,14.6" fill="none" stroke="#555" stroke-width="0.9"/></svg>
<svg style="position:absolute;left:47px;top:113px;" width="13" height="16" viewBox="0 0 13 16"><circle cx="6.1" cy="5.6" r="5.1" fill="#ffa500"/><path d="M4,11.4H8.2V13.4C8.2,15 4,15 4,13.4Z" fill="#8a8a8a"/></svg>
<svg style="position:absolute;left:62px;top:113px;" width="16" height="16" viewBox="0 0 16 16"><circle cx="7.6" cy="7.6" r="4.3" fill="#ffa500"/><path d="M7.6,0.4V2M7.6,13.2V14.8M0.4,7.6H2M13.2,7.6H14.8M2.5,2.5L3.6,3.6M11.6,11.6L12.7,12.7M12.7,2.5L11.6,3.6M2.5,12.7L3.6,11.6" stroke="#ffa500" stroke-width="1.1" stroke-linecap="round"/></svg>
<svg style="position:absolute;left:83px;top:113px;" width="17" height="17" viewBox="0 0 17 17"><rect x="3" y="3" width="8.4" height="8.4" fill="#f4f4f4" stroke="#8a8a8a" stroke-width="1"/><path d="M0.6,3.6V0.6H3.6M10.6,0.6H13.6V3.6M0.6,10.6V13.4H3.6" fill="none" stroke="#555" stroke-width="1.1"/><circle cx="11.6" cy="11.8" r="3.6" fill="#e1e1e1"/><circle cx="11.6" cy="11.8" r="2.4" fill="#ffa500"/><circle cx="11.6" cy="11.8" r="4.1" fill="none" stroke="#ffa500" stroke-width="1.1" stroke-dasharray="1.1 2.12"/></svg>
<svg style="position:absolute;left:103px;top:113px;" width="15" height="16" viewBox="0 0 15 16"><rect x="0" y="6.6" width="11" height="8.2" fill="#ffa500"/><path d="M8.4,6.6V3.6C8.4,-0.2 13.4,-0.2 13.4,3.6V5" fill="none" stroke="#ffa500" stroke-width="1.6"/><rect x="5" y="9.4" width="1.1" height="2.6" fill="#fff"/></svg>
<svg style="position:absolute;left:344px;top:113px;" width="17" height="16" viewBox="0 0 17 16"><g transform="translate(1,4)"><path d="M5.4,0H13.4L7.6,5.6H-0.4Z" fill="#62bdf7"/><path d="M0,7.4H7.4L9,5.8M0,8.6H7.4L9.2,6.8" fill="none" stroke="#f0f0f0" stroke-width="0"/><path d="M-0.2,7H7.4L13,1.6V3.4L7.6,8.8H-0.2Z" fill="#f0f0f0"/><path d="M-0.2,10.2H7.4L13,4.8V6.6L7.6,12H-0.2Z" fill="#f0f0f0"/></g><circle cx="8" cy="3.2" r="3.2" fill="#dcdcdc"/></svg>
<svg style="position:absolute;left:367px;top:113px;" width="17" height="16" viewBox="0 0 17 16"><g transform="translate(3,4)"><path d="M5.4,0H13.4L7.6,5.6H-0.4Z" fill="#dcdcdc"/><path d="M0,7.4H7.4L9,5.8M0,8.6H7.4L9.2,6.8" fill="none" stroke="#f0f0f0" stroke-width="0"/><path d="M-0.2,7H7.4L13,1.6V3.4L7.6,8.8H-0.2Z" fill="#f0f0f0"/><path d="M-0.2,10.2H7.4L13,4.8V6.6L7.6,12H-0.2Z" fill="#f0f0f0"/></g><path d="M0.2,3.2L4.2,0V2C7.6,1.8 9.8,3.4 10,6.2C8.8,4.8 7,4.4 4.2,4.6V6.4Z" fill="#62bdf7"/></svg>
<svg style="position:absolute;left:390px;top:113px;" width="17" height="16" viewBox="0 0 17 16"><path d="M5.4,0H13.4L7.6,5.6H-0.4Z" fill="#dcdcdc"/><path d="M0,7.4H7.4L9,5.8M0,8.6H7.4L9.2,6.8" fill="none" stroke="#f0f0f0" stroke-width="0"/><path d="M-0.2,7H7.4L13,1.6V3.4L7.6,8.8H-0.2Z" fill="#f0f0f0"/><path d="M-0.2,10.2H7.4L13,4.8V6.6L7.6,12H-0.2Z" fill="#f0f0f0"/><path d="M9.6,6L11.6,4M12.4,6.6L13,6" stroke="#f0f0f0" stroke-width="1"/><rect x="6.4" y="7.6" width="10" height="8.8" fill="#3b4453"/><rect x="7" y="8.2" width="9" height="7.8" fill="#f4f4f4"/><rect x="7" y="8.2" width="9" height="1.6" fill="#9a9a9a"/><path d="M8.8,11.6H10M11,11.6H14.4M8.8,13.8H10M11,13.8H14.4" stroke="#444" stroke-width="1"/></svg>
<div style="position:absolute;left:409.5px;top:110px;width:2px;height:23px;background:#2a313c;"></div>
<svg style="position:absolute;left:414px;top:113px;shape-rendering:crispEdges" width="3" height="13" viewBox="0 0 3 13"><g fill="#c8ccd2"><rect x="0" y="0" width="1" height="1"/><rect x="2" y="0" width="1" height="1"/><rect x="0" y="2" width="1" height="1"/><rect x="2" y="2" width="1" height="1"/><rect x="0" y="4" width="1" height="1"/><rect x="2" y="4" width="1" height="1"/><rect x="0" y="6" width="1" height="1"/><rect x="2" y="6" width="1" height="1"/><rect x="0" y="8" width="1" height="1"/><rect x="2" y="8" width="1" height="1"/><rect x="0" y="10" width="1" height="1"/><rect x="2" y="10" width="1" height="1"/><rect x="0" y="12" width="1" height="1"/><rect x="2" y="12" width="1" height="1"/></g></svg>
<div style="position:absolute;left:992.5px;top:110px;width:2px;height:23px;background:#2a313c;"></div>
<svg style="position:absolute;left:997px;top:113px;shape-rendering:crispEdges" width="3" height="13" viewBox="0 0 3 13"><g fill="#c8ccd2"><rect x="0" y="0" width="1" height="1"/><rect x="2" y="0" width="1" height="1"/><rect x="0" y="2" width="1" height="1"/><rect x="2" y="2" width="1" height="1"/><rect x="0" y="4" width="1" height="1"/><rect x="2" y="4" width="1" height="1"/><rect x="0" y="6" width="1" height="1"/><rect x="2" y="6" width="1" height="1"/><rect x="0" y="8" width="1" height="1"/><rect x="2" y="8" width="1" height="1"/><rect x="0" y="10" width="1" height="1"/><rect x="2" y="10" width="1" height="1"/><rect x="0" y="12" width="1" height="1"/><rect x="2" y="12" width="1" height="1"/></g></svg>
<svg style="position:absolute;left:1005.5px;top:113.5px;" width="17" height="15" viewBox="0 0 17 15"><path d="M0.9,0V14.6M15.8,0V14.6" stroke="#ececec" stroke-width="1.1"/><path d="M1.6,5.2H15.2" stroke="#62bdf7" stroke-width="1.1"/><path d="M1.6,5.2l2.6,-1.5v3ZM15.2,5.2l-2.6,-1.5v3Z" fill="#62bdf7"/></svg>
<svg style="position:absolute;left:1028.5px;top:113px;" width="17" height="16" viewBox="0 0 17 16"><path d="M0.6,5.8L6.6,0.2M10.6,15.6L16.6,10" stroke="#ececec" stroke-width="1.1"/><path d="M4,4L13,12.6" stroke="#62bdf7" stroke-width="1.1"/><circle cx="4" cy="4" r="1.2" fill="#62bdf7"/><circle cx="13" cy="12.6" r="1.2" fill="#62bdf7"/></svg>
<svg style="position:absolute;left:1052px;top:113px;" width="17" height="16" viewBox="0 0 17 16"><path d="M0,15.4H7M15.6,0V7.4" stroke="#ececec" stroke-width="1.1"/><path d="M5.8,15C6,9.6 9.4,5.8 15.4,5.2" fill="none" stroke="#ececec" stroke-width="1.2"/><path d="M2.4,13.6C2.6,7 7,2.6 14,2.2" fill="none" stroke="#62bdf7" stroke-width="1.2"/><path d="M2.4,14.6L0.9,11.6H3.9ZM15,2.2L12.2,0.6V3.8Z" fill="#62bdf7"/></svg>
<svg style="position:absolute;left:1075px;top:113px;" width="17" height="16" viewBox="0 0 17 16"><path d="M0.6,0.4V15.4H16.2" fill="none" stroke="#ececec" stroke-width="1.1"/><path d="M7.6,5V15M1,8.4H11" stroke="#62bdf7" stroke-width="1.1"/><path d="M6.2,0.2L9,3.4M9,0.2L6.2,3.4" stroke="#62bdf7" stroke-width="0.9"/><path d="M12.2,5.6L13.6,7.4L15,5.6M13.6,7.4V9.4" fill="none" stroke="#62bdf7" stroke-width="0.9"/></svg>
<div style="position:absolute;left:1098px;top:112px;width:1px;height:18px;background:#5d6573;"></div>
<svg style="position:absolute;left:1104px;top:113px;" width="17" height="16" viewBox="0 0 17 16"><path d="M0.6,15.8C0.8,7.4 6.4,1 16,0.6" fill="none" stroke="#ececec" stroke-width="1.2"/><path d="M6.8,6.8L15.8,15.8" stroke="#62bdf7" stroke-width="1.2"/><circle cx="6.8" cy="6.8" r="1.2" fill="#62bdf7"/></svg>
<svg style="position:absolute;left:1127px;top:113px;" width="17" height="16" viewBox="0 0 17 16"><path d="M0.6,15.8C0.8,7.4 6.4,1 16,0.6" fill="none" stroke="#ececec" stroke-width="1.2"/><path d="M5.6,6.6L10.2,10.8L10.6,8.2L15.6,13" fill="none" stroke="#62bdf7" stroke-width="1.2"/><circle cx="5.8" cy="6.8" r="1.2" fill="#62bdf7"/></svg>
<svg style="position:absolute;left:1150px;top:113px;" width="16" height="16" viewBox="0 0 16 16"><circle cx="8" cy="8" r="7.4" fill="none" stroke="#ececec" stroke-width="1.2"/><path d="M3.6,3.6L12.4,12.4" stroke="#62bdf7" stroke-width="1.2"/><path d="M2.8,2.8L5.8,3.6L3.6,5.8ZM13.2,13.2L10.2,12.4L12.4,10.2Z" fill="#62bdf7"/></svg>
<svg style="position:absolute;left:1173px;top:113px;" width="17" height="16" viewBox="0 0 17 16"><path d="M0,15.4H16.2M0,10L10,0.2" fill="none" stroke="#ececec" stroke-width="1.1"/><path d="M9,3.4C11.6,6 13,10 13,14.4" fill="none" stroke="#62bdf7" stroke-width="1.2"/><path d="M13,15.2L11.6,12.4H14.4ZM8.4,2.8L11.4,3.4L9.4,5.6Z" fill="#62bdf7"/></svg>
<div style="position:absolute;left:1196px;top:112px;width:1px;height:18px;background:#5d6573;"></div>
<svg style="position:absolute;left:1202px;top:113px;overflow:hidden" width="6" height="16" viewBox="0 0 6 16"><path d="M0.8,0V16M1,2.6H6" stroke="#ececec" stroke-width="1.1"/><path d="M1.6,2.6L3.6,1.6V3.6Z" fill="#ececec"/><circle cx="5.4" cy="10.6" r="1" fill="#f5c24c"/></svg>
<svg style="position:absolute;left:13px;top:140px;shape-rendering:crispEdges" width="14" height="3" viewBox="0 0 14 3"><g fill="#c8ccd2"><rect x="0" y="0" width="1" height="1"/><rect x="0" y="2" width="1" height="1"/><rect x="2" y="0" width="1" height="1"/><rect x="2" y="2" width="1" height="1"/><rect x="4" y="0" width="1" height="1"/><rect x="4" y="2" width="1" height="1"/><rect x="6" y="0" width="1" height="1"/><rect x="6" y="2" width="1" height="1"/><rect x="8" y="0" width="1" height="1"/><rect x="8" y="2" width="1" height="1"/><rect x="10" y="0" width="1" height="1"/><rect x="10" y="2" width="1" height="1"/><rect x="12" y="0" width="1" height="1"/><rect x="12" y="2" width="1" height="1"/></g></svg>
<svg style="position:absolute;left:1184px;top:140px;shape-rendering:crispEdges" width="14" height="3" viewBox="0 0 14 3"><g fill="#c8ccd2"><rect x="0" y="0" width="1" height="1"/><rect x="0" y="2" width="1" height="1"/><rect x="2" y="0" width="1" height="1"/><rect x="2" y="2" width="1" height="1"/><rect x="4" y="0" width="1" height="1"/><rect x="4" y="2" width="1" height="1"/><rect x="6" y="0" width="1" height="1"/><rect x="6" y="2" width="1" height="1"/><rect x="8" y="0" width="1" height="1"/><rect x="8" y="2" width="1" height="1"/><rect x="10" y="0" width="1" height="1"/><rect x="10" y="2" width="1" height="1"/><rect x="12" y="0" width="1" height="1"/><rect x="12" y="2" width="1" height="1"/></g></svg>
<svg style="position:absolute;left:0px;top:0px;" width="1216" height="743" viewBox="0 0 1216 743"><path d="M14.6,163.2L27.4,150.4" stroke="#e6e6e6" stroke-width="1.1"/><rect x="12.65" y="162.45000000000002" width="2.7" height="2.7" fill="#62bdf7"/><rect x="26.65" y="148.45000000000002" width="2.7" height="2.7" fill="#62bdf7"/><path d="M15.6,184.4L26.8,173.4" stroke="#e6e6e6" stroke-width="1.1" stroke-dasharray="2.4 1.4"/><path d="M13,186.8L14.4,182L17.8,185.4ZM29.2,171.2L27.8,176L24.4,172.6Z" fill="#e6e6e6"/><rect x="19.549999999999997" y="177.65" width="2.7" height="2.7" fill="#62bdf7"/><path d="M16,204.7H21" stroke="#e6e6e6" stroke-width="1.2"/><path d="M24.4,197.2C28.6,197.6 29,203.8 24.6,204.6" fill="none" stroke="#e6e6e6" stroke-width="1.2"/><rect x="21.549999999999997" y="195.45000000000002" width="2.7" height="2.7" fill="#62bdf7"/><rect x="12.450000000000001" y="203.35" width="2.7" height="2.7" fill="#62bdf7"/><rect x="21.549999999999997" y="203.35" width="2.7" height="2.7" fill="#62bdf7"/><path d="M21.3,216.4L27.6,221.6L24.9,228.4H16.8L14.5,221.6Z" fill="none" stroke="#e6e6e6" stroke-width="1.1"/><rect x="19.65" y="221.45000000000002" width="2.7" height="2.7" fill="#62bdf7"/><rect x="23.65" y="227.45000000000002" width="2.7" height="2.7" fill="#62bdf7"/><rect x="14.4" y="240.6" width="13.4" height="9" fill="none" stroke="#e6e6e6" stroke-width="1.1"/><rect x="12.85" y="238.85" width="2.7" height="2.7" fill="#62bdf7"/><rect x="26.65" y="248.65" width="2.7" height="2.7" fill="#62bdf7"/><path d="M27,261.2C21,262 16,266.6 15.2,272.8" fill="none" stroke="#e6e6e6" stroke-width="1.2" stroke-dasharray="3.2 2"/><rect x="26.65" y="259.54999999999995" width="2.7" height="2.7" fill="#62bdf7"/><rect x="17.45" y="263.45" width="2.7" height="2.7" fill="#62bdf7"/><rect x="13.65" y="272.34999999999997" width="2.7" height="2.7" fill="#62bdf7"/><circle cx="20.8" cy="289.1" r="7.6" fill="none" stroke="#e6e6e6" stroke-width="1.1"/><path d="M21.6,288.2L25,284.8" stroke="#62bdf7" stroke-width="1.1" stroke-dasharray="1.4 1"/><path d="M26.2,283.6L25.6,286.4L23.4,284.2Z" fill="#62bdf7"/><rect x="19.25" y="287.95" width="2.7" height="2.7" fill="#62bdf7"/><path d="M15.4,310.6C12.4,309.6 13.6,305.4 16.6,306.2C17.6,304 21,304.2 21.8,306C23.4,304.6 26.4,305.4 26.4,307.6C29.4,307.6 29.8,311.6 27.2,312.4C28,315 24.6,316.4 23,314.8C22,317.6 18,317.6 17.2,315.2C14.2,315.8 13,312.4 15.4,310.6Z" fill="none" stroke="#e6e6e6" stroke-width="1.1"/><path d="M27.6,327.4L25.4,334.6M23.6,334.8L18,330.8M16.2,331.4L14.4,338.6" stroke="#e6e6e6" stroke-width="1.1"/><rect x="26.65" y="324.75" width="2.7" height="2.7" fill="#62bdf7"/><rect x="15.35" y="328.54999999999995" width="2.7" height="2.7" fill="#62bdf7"/><rect x="23.549999999999997" y="334.65" width="2.7" height="2.7" fill="#62bdf7"/><rect x="12.65" y="338.75" width="2.7" height="2.7" fill="#62bdf7"/><ellipse cx="21" cy="355.2" rx="7.2" ry="4.6" fill="none" stroke="#e6e6e6" stroke-width="1.1" stroke-dasharray="5 1.6"/><rect x="19.65" y="348.54999999999995" width="2.7" height="2.7" fill="#62bdf7"/><rect x="12.55" y="353.65" width="2.7" height="2.7" fill="#62bdf7"/><rect x="26.65" y="353.65" width="2.7" height="2.7" fill="#62bdf7"/><path d="M25.6,372.6C21,370.6 15,372.4 14.2,376C13.8,378 15.4,379.6 17.4,380.4" fill="none" stroke="#e6e6e6" stroke-width="1.1"/><rect x="18.65" y="374.25" width="2.7" height="2.7" fill="#62bdf7"/><rect x="25.65" y="374.25" width="2.7" height="2.7" fill="#62bdf7"/><rect x="18.65" y="379.65" width="2.7" height="2.7" fill="#62bdf7"/><path d="M19.8,391H26L29,394V406.4H19.8Z" fill="#62bdf7"/><path d="M26,391L29,394H26Z" fill="#e8f4ff"/><path d="M26.4,406.4H29V403.6Z" fill="#fff"/><rect x="14" y="397.4" width="7.8" height="6" fill="#6a7282" stroke="#e6e6e6" stroke-width="1"/><rect x="13" y="402.6" width="1.8" height="1.8" fill="#e6e6e6"/><circle cx="22.6" cy="403.4" r="3" fill="#6a7282" fill-opacity="0.6" stroke="#c8ccd2" stroke-width="1"/><rect x="14.4" y="418.6" width="7.6" height="7.2" fill="#6a7282" stroke="#e6e6e6" stroke-width="1"/><rect x="13" y="425" width="1.8" height="1.8" fill="#e6e6e6"/><circle cx="23.6" cy="425.2" r="3.2" fill="#7d8492" stroke="#c8ccd2" stroke-width="1"/><path d="M23.6,425.2V422.6H26" fill="none" stroke="#c8ccd2" stroke-width="0.7"/><path d="M24.6,412.6L25.6,415.2L28.2,414.2L27,416.8L29.2,418.2L26.6,418.8L26.8,421.4L24.6,419.8L22.4,421.4L22.6,418.8L20,418.2L22.2,416.8L21,414.2L23.6,415.2Z" fill="#f7c14a"/><rect x="20.0" y="437.0" width="2" height="2" fill="#f4f4f4"/><rect x="15.0" y="442.0" width="2" height="2" fill="#f4f4f4"/><rect x="25.0" y="442.0" width="2" height="2" fill="#f4f4f4"/><rect x="20.0" y="447.0" width="2" height="2" fill="#f4f4f4"/><rect x="16.4" y="460.2" width="9" height="9.2" fill="#2b3440"/><path d="M17,466L22,460.6M17,469.4L25.2,460.8M20,469.4L25.4,463.8M23.2,469.4L25.4,467" stroke="#62bdf7" stroke-width="1.1"/><path d="M15.4,457V472.6M26.4,457V472.6M13,459.2H29M13,470.4H29" stroke="#e6e6e6" stroke-width="1.1"/><rect x="16.2" y="482.20" width="9.6" height="1.9" fill="#62bdf7"/><rect x="16.2" y="483.94" width="9.6" height="1.9" fill="#5aa9dc"/><rect x="16.2" y="485.68" width="9.6" height="1.9" fill="#5294be"/><rect x="16.2" y="487.42" width="9.6" height="1.9" fill="#4a7fa0"/><rect x="16.2" y="489.16" width="9.6" height="1.9" fill="#436a83"/><rect x="16.2" y="490.90" width="9.6" height="1.9" fill="#3e566a"/><path d="M15.4,479V494.6M26.4,479V494.6M13,481.4H29M13,493H29" stroke="#e6e6e6" stroke-width="1.1"/><path d="M10,494H13.2V501.4H22.6L28.6,507.6V514.6H13.6V507H10Z" fill="#e6e6e6"/><circle cx="20.4" cy="508.4" r="2.5" fill="#3b4453"/><rect x="13.4" y="524" width="15.4" height="13.4" fill="#e6e6e6"/><rect x="14.6" y="525.4" width="13" height="2.2" fill="#3b4453"/><rect x="14.6" y="529.0" width="3.6" height="1.8" fill="#3b4453"/><rect x="19.1" y="529.0" width="3.6" height="1.8" fill="#3b4453"/><rect x="23.6" y="529.0" width="3.6" height="1.8" fill="#3b4453"/><rect x="14.6" y="531.9" width="3.6" height="1.8" fill="#3b4453"/><rect x="19.1" y="531.9" width="3.6" height="1.8" fill="#3b4453"/><rect x="23.6" y="531.9" width="3.6" height="1.8" fill="#3b4453"/><rect x="14.6" y="534.8" width="3.6" height="1.8" fill="#3b4453"/><rect x="19.1" y="534.8" width="3.6" height="1.8" fill="#3b4453"/><rect x="23.6" y="534.8" width="3.6" height="1.8" fill="#3b4453"/><circle cx="16.4" cy="570.6" r="3.5" fill="#5fd078"/><circle cx="25.4" cy="579.6" r="3.6" fill="#62bdf7"/><path d="M21,569.6H25.8V573" fill="none" stroke="#f4f4f4" stroke-width="1.2"/><path d="M23.6,572.4H28L25.8,575Z" fill="#f4f4f4"/><path d="M10,153.6L13,151M10.2,177C10.4,175 11.4,173.8 12.8,172.8M10,196.6H13M10.4,220C10.4,215 11,212 12.8,210.2M10,232.6H13.2M10,241.6H13.4M10.4,263C10.4,261 11,259.4 12,258.2M10,274.2L12.6,272.6M10,286.4L11.6,287.4M10.2,297.8L12,299.4M10.2,306L12.4,308.6M10,343L12.6,341.2M10.2,350L12.4,351.6M10.2,364.6L12.4,363.4M10.2,371.4L11.8,373" fill="none" stroke="#e6e6e6" stroke-width="1"/><rect x="10" y="389.4" width="3" height="1"  fill="#e6e6e6"/><rect x="10" y="390.4" width="2.6" height="5" fill="#8d95a3"/><rect x="10" y="395.4" width="3" height="1" fill="#e6e6e6"/><rect x="10" y="410" width="3" height="1"  fill="#e6e6e6"/><rect x="10" y="411" width="2.6" height="6" fill="#8d95a3"/><rect x="10" y="417" width="3" height="1" fill="#e6e6e6"/><rect x="10" y="433.6" width="1.4" height="2.6" fill="#e6e6e6"/><rect x="10" y="451" width="3" height="1" fill="#e6e6e6"/><path d="M10.6,457.6L12.6,454.4M10.6,460.4L12.6,457.6" stroke="#62bdf7" stroke-width="1"/><rect x="10" y="462" width="2.6" height="1" fill="#e6e6e6"/><rect x="10" y="473" width="3" height="1" fill="#e6e6e6"/><rect x="11" y="475" width="1.8" height="7" fill="#62bdf7"/><rect x="10" y="484" width="2.6" height="1" fill="#e6e6e6"/><rect x="10" y="516" width="2.6" height="1" fill="#e6e6e6"/><path d="M10,521H12.6V529.6H10M10,525.2H12.4" fill="none" stroke="#e6e6e6" stroke-width="1"/><path d="M10.4,552L12.8,541.6" stroke="#e6e6e6" stroke-width="1.4"/><rect x="10" y="559.6" width="2.6" height="6.4" fill="#5fd078"/><rect x="11.5" y="255.70000000000002" width="1.8" height="1.8" fill="#62bdf7"/><rect x="9.9" y="320.9" width="2.2" height="2.2" fill="#62bdf7"/></svg>
<div class="t" style="left:14.6px;top:541.5px;font-size:19.5px;line-height:20px;color:#f0f0f0;">A</div>
<svg style="position:absolute;left:0px;top:0px;" width="1216" height="743" viewBox="0 0 1216 743"><path d="M1187.2,158.6L1197.6,149.4L1200,149.6V153.6L1190.8,162.6Z" fill="#f7c85e"/><path d="M1187.2,158.6L1188.6,157.4L1192.2,161.2L1190.8,162.6Z" fill="#fff"/><path d="M1185.8,159.6C1186.2,158.6 1186.8,158.4 1187.4,158.4L1191,162.4C1190.6,163.6 1188.6,164.4 1187,163.4C1185.6,162.6 1185.4,160.8 1185.8,159.6Z" fill="#f0504e"/><path d="M1184,164.5H1187" stroke="#e6e6e6" stroke-width="1.1"/><path d="M1192,164.5H1200" stroke="#62bdf7" stroke-width="1.1"/><circle cx="1187.5" cy="174.5" r="3" fill="none" stroke="#e6e6e6" stroke-width="1.2"/><path d="M1192,173H1196.6V176.4" fill="none" stroke="#f4f4f4" stroke-width="1.2"/><path d="M1194.4,176H1198.8L1196.6,178.6Z" fill="#f4f4f4"/><circle cx="1191.2" cy="183.5" r="3" fill="none" stroke="#62bdf7" stroke-width="1.2"/><circle cx="1197" cy="183.5" r="3" fill="none" stroke="#62bdf7" stroke-width="1.2"/><path d="M1190,195.6V206.6H1184.6Z" fill="none" stroke="#e6e6e6" stroke-width="1.1"/><path d="M1192.8,195.6V206.6H1198.4Z" fill="none" stroke="#62bdf7" stroke-width="1.1"/><path d="M1200,217.6H1190C1182.4,217.6 1182.4,228.4 1190,228.4H1200" fill="none" stroke="#62bdf7" stroke-width="1.2"/><path d="M1200,220.6H1190.6C1186.6,220.6 1186.6,225.4 1190.6,225.4H1200" fill="none" stroke="#e6e6e6" stroke-width="1.2"/><rect x="1185.6" y="239" width="4.8" height="4.8" fill="none" stroke="#e6e6e6" stroke-width="1.1"/><rect x="1193.8" y="239" width="4.8" height="4.8" fill="none" stroke="#62bdf7" stroke-width="1.1"/><rect x="1185.6" y="247" width="4.8" height="4.8" fill="none" stroke="#62bdf7" stroke-width="1.1"/><rect x="1193.8" y="247" width="4.8" height="4.8" fill="none" stroke="#62bdf7" stroke-width="1.1"/><path d="M1200.4,250.6V254H1197Z" fill="#fff"/><path d="M1191.4,260V273M1185,266.5H1198" stroke="#f4f4f4" stroke-width="1.4"/><path d="M1191.4,258.6L1194,262H1188.8ZM1191.4,274.4L1194,271H1188.8ZM1183.6,266.5L1187,263.9V269.1ZM1199.2,266.5L1195.8,263.9V269.1Z" fill="#f4f4f4"/><path d="M1192.4,283.2C1187,282.6 1184.6,287 1185.2,290.6C1186,295.6 1191.4,298 1195.6,295.6C1198.4,294 1199.6,291 1199,288" fill="none" stroke="#e6e6e6" stroke-width="1.2"/><path d="M1192.4,280.6L1196.6,283.4L1192.4,286.2Z" fill="#f4f4f4"/><path d="M1184.6,308.6V304H1199.6V318H1194" fill="none" stroke="#62bdf7" stroke-width="1.2"/><rect x="1184.6" y="310.8" width="8" height="7.2" fill="none" stroke="#e6e6e6" stroke-width="1.2"/><rect x="1184.6" y="325.8" width="5.8" height="14.4" fill="none" stroke="#e6e6e6" stroke-width="1.2"/><path d="M1192,325.8H1194.6L1199.4,340.2H1192" fill="none" stroke="#62bdf7" stroke-width="1.2"/><path d="M1188,336.6H1193" stroke="#f4f4f4" stroke-width="1.2"/><path d="M1195.6,336.6L1192.4,334.6V338.6Z" fill="#f4f4f4"/><path d="M1184,348.5H1191" stroke="#62bdf7" stroke-width="1.1" stroke-dasharray="1.6 1"/><path d="M1195.6,348.5H1200" stroke="#e6e6e6" stroke-width="1.1"/><path d="M1187.2,349.4L1190.8,349.8L1195,357.4L1192.8,358.8ZM1194.8,346.6L1196,354L1192.8,358.6L1191,357.2Z" fill="#f4f4f4"/><circle cx="1192.4" cy="360.6" r="1.9" fill="none" stroke="#f4f4f4" stroke-width="1.3"/><circle cx="1197" cy="358.8" r="1.9" fill="none" stroke="#f4f4f4" stroke-width="1.3"/><path d="M1198.5,370.8V383" stroke="#e6e6e6" stroke-width="1.2"/><path d="M1188,375.5H1194.6" stroke="#f4f4f4" stroke-width="1.2"/><path d="M1197.4,375.5L1194,373.4V377.6Z" fill="#f4f4f4"/><path d="M1184,379.5H1187.6" stroke="#e6e6e6" stroke-width="1.1"/><path d="M1189,379.5H1197" stroke="#62bdf7" stroke-width="1.1" stroke-dasharray="1.6 1"/><path d="M1193.6,394.8H1184.6V404.2H1199.6V394.8H1196.6" fill="none" stroke="#e6e6e6" stroke-width="1.2"/><path d="M1195.2,392V397.2" stroke="#62bdf7" stroke-width="1.2"/><path d="M1188.4,416.4H1184.6V426.4H1199.6V416.4H1195.8" fill="none" stroke="#e6e6e6" stroke-width="1.2"/><path d="M1189.8,414V419M1194.4,414V419" stroke="#62bdf7" stroke-width="1.2"/><path d="M1184,443.4H1188.4M1195.6,443.4H1200" stroke="#e6e6e6" stroke-width="1.1"/><path d="M1188,441L1192,443.4L1188,445.8ZM1196,441L1192,443.4L1196,445.8Z" fill="#62bdf7"/><path d="M1194,457.5H1200M1184.5,467V473" stroke="#e6e6e6" stroke-width="1.2"/><path d="M1193,458.6L1185,466" stroke="#62bdf7" stroke-width="1.2"/><path d="M1194,479.3H1200M1184.5,489.6V495" stroke="#e6e6e6" stroke-width="1.2"/><path d="M1193,479.4C1188,479.6 1184.8,483 1184.6,488.4" fill="none" stroke="#62bdf7" stroke-width="1.2"/><path d="M1199.8,501C1199.8,504 1199.6,506.4 1199,509M1185.6,511C1184.8,513 1184.6,515 1184.5,517" fill="none" stroke="#e6e6e6" stroke-width="1.2"/><path d="M1199,509.4C1197.6,514 1195,514.6 1192.6,511.6C1190,508.4 1187.4,507.4 1185.6,511" fill="none" stroke="#62bdf7" stroke-width="1.2"/><path d="M1184.6,529.4V538M1186.4,528.8L1190.4,525H1199.6L1196.4,528.8M1199.6,525V534.4L1196.6,537.8V529.6" fill="none" stroke="#62bdf7" stroke-width="1.1"/><rect x="1186.4" y="529.6" width="8" height="8" fill="none" stroke="#e6e6e6" stroke-width="1.2"/></svg>
<svg style="position:absolute;left:0px;top:0px;" width="1216" height="743" viewBox="0 0 1216 743"><path d="M723,712.4V727.2M727,712.4V727.2M731.1,712.4V727.2M719,715.7H734.4M719,719.8H734.4M719,723.8H734.4" stroke="#f4f4f4" stroke-width="1.15"/><rect x="745.0" y="713.0" width="2" height="2" fill="#f4f4f4"/><rect x="750.1" y="713.0" width="2" height="2" fill="#f4f4f4"/><rect x="755.2" y="713.0" width="2" height="2" fill="#f4f4f4"/><rect x="745.0" y="718.4" width="2" height="2" fill="#f4f4f4"/><rect x="750.1" y="718.4" width="2" height="2" fill="#f4f4f4"/><rect x="755.2" y="718.4" width="2" height="2" fill="#f4f4f4"/><rect x="745.0" y="723.8" width="2" height="2" fill="#f4f4f4"/><rect x="750.1" y="723.8" width="2" height="2" fill="#f4f4f4"/><rect x="755.2" y="723.8" width="2" height="2" fill="#f4f4f4"/><path d="M766.8,718.4H775.2L771.0,722.4Z" fill="#dcdcdc"/><path d="M786.5,712V727.4H802M786.5,722.8H791.6V727.4" fill="none" stroke="#f4f4f4" stroke-width="1.2"/><circle cx="817" cy="720.6" r="6.5" fill="none" stroke="#f4f4f4" stroke-width="1.3"/><path d="M826.4,720.4H817L824.2,712.8" fill="none" stroke="#f4f4f4" stroke-width="1.2"/><path d="M833.8,718.4H842.2L838.0,722.4Z" fill="#dcdcdc"/><path d="M851,713L864.2,726.2" stroke="#f05a5a" stroke-width="0.95"/><path d="M857.5,712V727.2" stroke="#5fdc78" stroke-width="1.05"/><rect x="856.3" y="718.4" width="2.4" height="2.4" fill="#3b4453" stroke="#fff" stroke-width="0.8"/><path d="M873.8,718.4H882.2L878.0,722.4Z" fill="#dcdcdc"/><path d="M903.4,713.6L891.4,725.2H907.2" fill="none" stroke="#f4f4f4" stroke-width="1.3"/><rect x="896.2" y="718.2" width="2.8" height="2.8" fill="#f4f4f4"/><rect x="917.6" y="714.4" width="13" height="13" fill="none" stroke="#f4f4f4" stroke-width="1.3"/><rect x="915.4" y="712.4" width="4.2" height="4.2" fill="#5a8ec8" stroke="#f4f4f4" stroke-width="1.1"/><path d="M939,718.4H947.4L943.2,722.4Z" fill="#dcdcdc"/><path d="M964.8,712.4L967.5,718.4L966.8,720.2L969.4,722.8L971.8,727.6L969.4,727.6L964.8,723.4L960.1999999999999,727.6L957.8,727.6L960.1999999999999,722.8L962.8,720.2L962.0999999999999,718.4Z" fill="#ffffff"/><circle cx="970.8" cy="715.6" r="2.3" fill="none" stroke="#fff" stroke-width="1"/><path d="M989,712.4L991.7,718.4L991,720.2L993.6,722.8L996,727.6L993.6,727.6L989,723.4L984.4,727.6L982,727.6L984.4,722.8L987,720.2L986.3,718.4Z" fill="#dcdcdc"/><path d="M993,715.8L996.6,711.6L996,714.4L998,714.2L994.6,718.6L995,716Z" fill="#dcdcdc" stroke="#3b4453" stroke-width="0.5"/><path d="M1014.2,712.4L1016.9000000000001,718.4L1016.2,720.2L1018.8000000000001,722.8L1021.2,727.6L1018.8000000000001,727.6L1014.2,723.4L1009.6,727.6L1007.2,727.6L1009.6,722.8L1012.2,720.2L1011.5,718.4Z" fill="#dcdcdc"/><path d="M1048,718.4H1056.4L1052.2,722.4Z" fill="#dcdcdc"/><g transform="translate(1074.6,719.5)" fill="#dcdcdc"><rect x="-1.7" y="-7.8" width="3.4" height="4" transform="rotate(0)"/><rect x="-1.7" y="-7.8" width="3.4" height="4" transform="rotate(45)"/><rect x="-1.7" y="-7.8" width="3.4" height="4" transform="rotate(90)"/><rect x="-1.7" y="-7.8" width="3.4" height="4" transform="rotate(135)"/><rect x="-1.7" y="-7.8" width="3.4" height="4" transform="rotate(180)"/><rect x="-1.7" y="-7.8" width="3.4" height="4" transform="rotate(225)"/><rect x="-1.7" y="-7.8" width="3.4" height="4" transform="rotate(270)"/><rect x="-1.7" y="-7.8" width="3.4" height="4" transform="rotate(315)"/><circle r="5.6"/><circle r="2.6" fill="#3b4453"/></g><path d="M1090.8,718.4H1099.2L1095.0,722.4Z" fill="#dcdcdc"/><path d="M1116,712V728.2M1107.8,719.9H1124.2" stroke="#f4f4f4" stroke-width="2.2"/><rect x="1135.6" y="712.8" width="6" height="6" fill="none" stroke="#dcdcdc" stroke-width="1.1"/><circle cx="1147.6" cy="718.6" r="3.1" fill="none" stroke="#dcdcdc" stroke-width="1.1"/><path d="M1141.4,722.2L1145,727.4H1137.8Z" fill="none" stroke="#dcdcdc" stroke-width="1.1"/><rect x="1162.8" y="714.6" width="14.6" height="10.8" fill="none" stroke="#f4f4f4" stroke-width="1.3"/><path d="M1171.4,716.6H1175.4V720.6ZM1164.8,719.4V723.4H1168.8Z" fill="#dcdcdc"/><path d="M1172,720L1174.6,717.4M1165.6,722.6L1168.2,720" stroke="#dcdcdc" stroke-width="1.1"/><path d="M1186,714.2H1202.2M1186,720.1H1202.2M1186,726H1202.2" stroke="#f4f4f4" stroke-width="2.1"/></svg>
<svg style="position:absolute;left:0px;top:0px;" width="1216" height="743" viewBox="0 0 1216 743"><rect x="272" y="683.0" width="1.6" height="1.6" fill="#c8ccd2"/><rect x="275" y="683.0" width="1.6" height="1.6" fill="#c8ccd2"/><rect x="272" y="685.5" width="1.6" height="1.6" fill="#c8ccd2"/><rect x="275" y="685.5" width="1.6" height="1.6" fill="#c8ccd2"/><rect x="272" y="688.0" width="1.6" height="1.6" fill="#c8ccd2"/><rect x="275" y="688.0" width="1.6" height="1.6" fill="#c8ccd2"/><rect x="272" y="690.5" width="1.6" height="1.6" fill="#c8ccd2"/><rect x="275" y="690.5" width="1.6" height="1.6" fill="#c8ccd2"/><rect x="272" y="693.0" width="1.6" height="1.6" fill="#c8ccd2"/><rect x="275" y="693.0" width="1.6" height="1.6" fill="#c8ccd2"/><rect x="272" y="695.5" width="1.6" height="1.6" fill="#c8ccd2"/><rect x="275" y="695.5" width="1.6" height="1.6" fill="#c8ccd2"/><rect x="272" y="698.0" width="1.6" height="1.6" fill="#c8ccd2"/><rect x="275" y="698.0" width="1.6" height="1.6" fill="#c8ccd2"/><rect x="272" y="700.5" width="1.6" height="1.6" fill="#c8ccd2"/><rect x="275" y="700.5" width="1.6" height="1.6" fill="#c8ccd2"/><path d="M282.6,686.8L291.2,695.6M291.2,686.8L282.6,695.6" stroke="#c0c4ca" stroke-width="1.7"/><path d="M304.6,699.6L312,692.4" stroke="#d4d4d4" stroke-width="2.2" stroke-linecap="round"/><path d="M317.6,688.8C318.4,691.6 316.2,694.6 312.8,694.2L310.4,691.8C310,688.6 312.8,686 315.8,687L313.4,689.4L315.2,691.2Z" fill="#d4d4d4"/><rect x="328.8" y="687" width="14.4" height="11.4" fill="none" stroke="#4a4a4a" stroke-width="1.2"/><rect x="328.8" y="687" width="14.4" height="2.4" fill="#4a4a4a"/><path d="M331.4,691.6L333.4,693.4L331.4,695.2M334.6,695.6H338" fill="none" stroke="#4a4a4a" stroke-width="1"/><path d="M346.4,691.2H353.6L350,695Z" fill="#4a4a4a"/><path d="M934.4,693.6H941.6L938,690.4Z" fill="#4a4a4a"/></svg>
<svg style="position:absolute;left:0px;top:0px;" width="1216" height="743" viewBox="0 0 1216 743"><path d="M133,62.8L140.6,70.4M140.6,62.8L133,70.4" stroke="#b4b8be" stroke-width="1.9"/><path d="M172,64V72.2M167.9,68.1H176.1" stroke="#a8acb4" stroke-width="1.9"/><path d="M191,711V719M187,715H195" stroke="#b4b8be" stroke-width="1.8"/></svg>
</body></html>
